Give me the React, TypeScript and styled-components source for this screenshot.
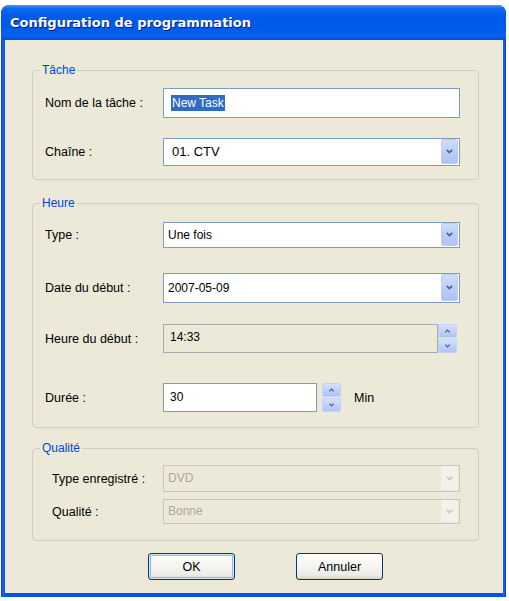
import styled, { createGlobalStyle } from "styled-components";

const Global = createGlobalStyle`
  html, body {
    margin: 0;
    padding: 0;
    background: #fff;
  }
  body {
    font-family: "Liberation Sans", Arial, sans-serif;
    font-size: 12px;
  }
`;

const Window = styled.div`
  margin: 5px 0 0 1px;
  width: 505px;
  height: 592px;
  box-sizing: border-box;
  border-radius: 8px 8px 0 0;
  background: linear-gradient(90deg, #0831d9 0, #166aee 2px, #0054e3 4px, #0054e3 calc(100% - 4px), #166aee calc(100% - 2px), #0831d9 100%);
  padding: 0 3px 4px 4px;
  display: flex;
  flex-direction: column;
  overflow: hidden;
`;

const TitleBar = styled.div`
  height: 35px;
  margin: 0 -3px 0 -4px;
  padding-left: 9px;
  display: flex;
  align-items: center;
  background: linear-gradient(180deg, #4a9cff 0%, #0e6cf2 9%, #005ae9 30%, #005be9 70%, #0663f0 88%, #034cd4 100%);
  border-radius: 8px 8px 0 0;
  color: #fff;
  font-family: "DejaVu Sans", Verdana, sans-serif;
  font-weight: bold;
  font-size: 13px;
  text-shadow: 1px 1px 0 #0a1883;
`;

const Client = styled.div`
  flex: 1;
  background: #ece9d8;
  display: flex;
  flex-direction: column;
  padding-top: 23px;
`;

const Group = styled.fieldset<{ $gap: number; $bottom: number }>`
  margin: ${p => p.$gap}px 0 0 27px;
  width: 447px;
  box-sizing: border-box;
  border: 1px solid #d0d0bf;
  border-radius: 4px;
  padding: 0 18px ${p => p.$bottom}px 12px;
  min-width: 0;
`;

const Legend = styled.legend`
  margin-left: -5px;
  padding: 0 2px;
  font-size: 12px;
  line-height: 14px;
  color: #0046d5;
`;

const Row = styled.div<{ $top: number; $h: number }>`
  display: grid;
  grid-template-columns: 118px 1fr;
  align-items: center;
  margin-top: ${p => p.$top}px;
  height: ${p => p.$h}px;
`;

const Label = styled.span<{ $indent?: number }>`
  padding-left: ${p => p.$indent ?? 0}px;
  font-size: 12.5px;
  color: #000;
  white-space: nowrap;
`;

const Field = styled.div<{ $indent?: number; $disabled?: boolean; $flat?: boolean; $width?: number }>`
  height: 100%;
  box-sizing: border-box;
  width: ${p => (p.$width ? `${p.$width}px` : "100%")};
  border: 1px solid ${p => (p.$disabled ? "#c9c7ba" : p.$flat ? "#a5acb2" : "#7f9db9")};
  background: ${p => (p.$disabled || p.$flat ? "#ece9d8" : "#fff")};
  color: ${p => (p.$disabled ? "#aca899" : "#000")};
  display: flex;
  align-items: ${p => (p.$flat ? "flex-start" : "center")};
  padding: ${p => (p.$flat ? "5px" : "0")} 1px 1px ${p => p.$indent ?? 4}px;
  font-size: 12px;
`;

const Value = styled.span<{ $size?: number }>`
  flex: 1;
  font-size: ${p => p.$size ?? 12}px;
  white-space: nowrap;
`;

const Selected = styled.span`
  background: #316ac5;
  color: #fff;
  padding: 1px 1px;
`;

const DropButton = styled.div<{ $disabled?: boolean }>`
  width: 17px;
  align-self: stretch;
  margin: 0;
  box-sizing: border-box;
  border-radius: 2px;
  display: flex;
  align-items: center;
  justify-content: center;
  border: 1px solid ${p => (p.$disabled ? "#f0efe6" : "#bccdf5")};
  background: ${p =>
    p.$disabled
      ? "#f3f2ea"
      : "linear-gradient(180deg, #d0dcfb 0%, #bccefa 50%, #aec3f6 100%)"};
`;

const FieldLine = styled.div`
  display: flex;
  align-items: stretch;
  height: 100%;
`;

const Spinner = styled.div<{ $gap: number }>`
  width: 19px;
  margin-left: ${p => p.$gap}px;
  display: flex;
  flex-direction: column;
  gap: 1px;
`;

const SpinButton = styled.div`
  flex: 1;
  border-radius: 2px;
  border: 1px solid #c3d3fd;
  background: linear-gradient(180deg, #d6e2fc 0%, #bccefa 60%, #b0c5f7 100%);
  display: flex;
  align-items: center;
  justify-content: center;
`;

const Unit = styled.span`
  margin-left: 13px;
  align-self: center;
  font-size: 12.5px;
`;

const ButtonBar = styled.div`
  display: flex;
  gap: 61px;
  margin: 12px 0 0 143px;
`;

const PushButton = styled.button<{ $default?: boolean }>`
  width: 87px;
  height: 27px;
  border: 1px solid #003c74;
  border-radius: 3px;
  background: linear-gradient(180deg, #ffffff 0%, #f6f6f3 40%, #ecebe6 85%, #d6d0c5 100%);
  box-shadow: ${p => (p.$default ? "inset 0 0 0 1px #cee7ff, inset 0 0 0 2px #98b8ea" : "none")};
  font-family: "Liberation Sans", Arial, sans-serif;
  font-size: 12.5px;
  color: #000;
  padding: 0;
`;

function Chevron({ color = "#4d6185", up = false, w = 9 }: { color?: string; up?: boolean; w?: number }) {
  const h = Math.round(w * 0.6);
  return (
    <svg width={w} height={h} viewBox="0 0 9 6">
      <path
        d={up ? "M1.2 5 L4.5 1.6 L7.8 5" : "M1.2 1 L4.5 4.4 L7.8 1"}
        fill="none"
        stroke={color}
        strokeWidth={1.9}
      />
    </svg>
  );
}

function Combo({ value, indent, size, disabled }: { value: string; indent?: number; size?: number; disabled?: boolean }) {
  return (
    <Field $indent={indent} $disabled={disabled}>
      <Value $size={size}>{value}</Value>
      <DropButton $disabled={disabled}>
        <Chevron color={disabled ? "#c9c7ba" : "#4d6185"} />
      </DropButton>
    </Field>
  );
}

function Spin({ gap }: { gap: number }) {
  return (
    <Spinner $gap={gap}>
      <SpinButton>
        <Chevron up w={7} />
      </SpinButton>
      <SpinButton>
        <Chevron w={7} />
      </SpinButton>
    </Spinner>
  );
}

export default function App() {
  return (
    <>
      <Global />
      <Window>
        <TitleBar>Configuration de programmation</TitleBar>
        <Client>
          <Group $gap={0} $bottom={13}>
            <Legend>Tâche</Legend>
            <Row $top={11} $h={30}>
              <Label>Nom de la tâche :</Label>
              <Field $indent={7}>
                <Value>
                  <Selected>New Task</Selected>
                </Value>
              </Field>
            </Row>
            <Row $top={20} $h={28}>
              <Label>Chaîne :</Label>
              <Combo value="01. CTV" indent={8} size={13} />
            </Row>
          </Group>

          <Group $gap={16} $bottom={15}>
            <Legend>Heure</Legend>
            <Row $top={12} $h={26}>
              <Label>Type :</Label>
              <Combo value="Une fois" />
            </Row>
            <Row $top={25} $h={30}>
              <Label>Date du début :</Label>
              <Combo value="2007-05-09" />
            </Row>
            <Row $top={21} $h={29}>
              <Label>Heure du début :</Label>
              <FieldLine>
                <Field $flat $indent={6} $width={275}>
                  <Value>14:33</Value>
                </Field>
                <Spin gap={0} />
              </FieldLine>
            </Row>
            <Row $top={30} $h={29}>
              <Label>Durée :</Label>
              <FieldLine>
                <Field $indent={6} $width={154}>
                  <Value>30</Value>
                </Field>
                <Spin gap={5} />
                <Unit>Min</Unit>
              </FieldLine>
            </Row>
          </Group>

          <Group $gap={13} $bottom={16}>
            <Legend>Qualité</Legend>
            <Row $top={10} $h={27}>
              <Label $indent={7}>Type enregistré :</Label>
              <Combo value="DVD" disabled />
            </Row>
            <Row $top={7} $h={25}>
              <Label $indent={7}>Qualité :</Label>
              <Combo value="Bonne" disabled />
            </Row>
          </Group>

          <ButtonBar>
            <PushButton $default>OK</PushButton>
            <PushButton>Annuler</PushButton>
          </ButtonBar>
        </Client>
      </Window>
    </>
  );
}
